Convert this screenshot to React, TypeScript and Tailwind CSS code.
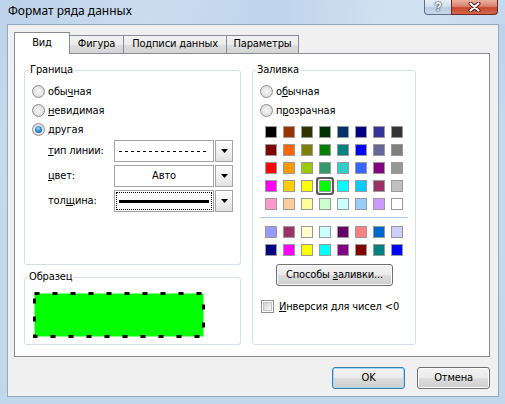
import React from "react";

const palette1: string[][] = [
  ["#000000", "#993300", "#333300", "#003300", "#003366", "#000080", "#333399", "#333333"],
  ["#800000", "#FF6600", "#808000", "#008000", "#008080", "#0000FF", "#666699", "#808080"],
  ["#FF0000", "#FF9900", "#99CC00", "#339966", "#33CCCC", "#3366FF", "#800080", "#969696"],
  ["#FF00FF", "#FFCC00", "#FFFF00", "#00FF00", "#00FFFF", "#00CCFF", "#993366", "#C0C0C0"],
  ["#FF99CC", "#FFCC99", "#FFFF99", "#CCFFCC", "#CCFFFF", "#99CCFF", "#CC99FF", "#FFFFFF"],
];
const palette2: string[][] = [
  ["#9999FF", "#993366", "#FFFFCC", "#CCFFFF", "#660066", "#FF8080", "#0066CC", "#CCCCFF"],
  ["#000080", "#FF00FF", "#FFFF00", "#00FFFF", "#800080", "#800000", "#008080", "#0000FF"],
];

function Radio({ checked, children }: { checked?: boolean; children: React.ReactNode }) {
  return (
    <div className="flex items-center h-[19px]">
      <span className="w-[13px] h-[13px] shrink-0 rounded-full border border-[#8f8f8f] bg-[radial-gradient(circle_at_50%_50%,#f6f6f6_0%,#e4e4e4_55%,#c9c9c9_100%)] flex items-center justify-center">
        {checked && (
          <span className="w-[7px] h-[7px] rounded-full bg-[radial-gradient(circle_at_45%_35%,#a6dcff_0%,#2f8fd8_45%,#0c4d98_100%)]" />
        )}
      </span>
      <span className="ml-[3px] leading-[14px]">{children}</span>
    </div>
  );
}

function Arrow() {
  return (
    <div className="w-[18px] h-full ml-[1px] border border-[#a3a3a3] bg-[linear-gradient(180deg,#ffffff_0%,#f1f1f1_50%,#e2e2e2_100%)] flex items-center justify-center">
      <svg width="7" height="4" viewBox="0 0 7 4">
        <path d="M0 0 H7 L3.5 4 Z" fill="#000" />
      </svg>
    </div>
  );
}

function Swatch({ color, selected }: { color: string; selected?: boolean }) {
  return (
    <div
      className={
        selected
          ? "w-[12px] h-[12px] border border-[#9a9a9a] rounded-[1px] shadow-[0_0_0_1px_#ffffff,0_0_0_3px_#5c5c5c]"
          : "w-[12px] h-[12px] border border-[#9a9a9a]"
      }
      style={{ backgroundColor: color }}
    />
  );
}

function WinButton({ children, primary, className }: { children: React.ReactNode; primary?: boolean; className?: string }) {
  return (
    <button
      className={
        (primary
          ? "border-[#3c7fb1] shadow-[inset_0_0_0_1px_#9fd8f6] "
          : "border-[#707070] shadow-[inset_0_0_0_1px_#fbfbfb] ") +
        "h-[22px] rounded-[3px] border bg-[linear-gradient(180deg,#f3f3f3_0%,#ebebeb_50%,#dddddd_50%,#cfcfcf_100%)] text-[11px] leading-[14px] text-black flex items-center justify-center " +
        (className ?? "")
      }
    >
      <span>{children}</span>
    </button>
  );
}

export default function App() {
  return (
    <div className="w-[505px] h-[404px] overflow-hidden flex flex-col text-[11px] tracking-[-0.15px] text-black font-['DejaVu_Sans_Condensed','DejaVu_Sans',sans-serif] bg-[linear-gradient(180deg,#bcd2ea_0%,#c6daef_35%,#c2d6ec_100%)]">
      {/* Title bar */}
      <div className="h-[24px] flex justify-between items-start bg-[linear-gradient(100deg,#bcd2ea_0%,#cadcf0_30%,#bfd4eb_55%,#d3e3f3_80%,#c4d8ee_100%)]">
        <span className="pl-[8px] pt-[3px] text-[12px] leading-[16px] tracking-normal font-['Noto_Sans','Open_Sans',sans-serif] text-black">
          Формат ряда данных
        </span>
        <div className="flex mr-[7px]">
          <div className="w-[27px] h-[15px] border border-t-0 border-r-0 border-[#5d6f86] rounded-bl-[4px] bg-[linear-gradient(180deg,#e6eef7_0%,#d3e0ee_45%,#b9cce1_55%,#c9d8e9_100%)] flex items-center justify-center">
            <span className="text-[12px] leading-[12px] font-bold text-white font-['Liberation_Sans',sans-serif] [text-shadow:0_0_1px_#34465c,0_0_1px_#34465c,0_0_2px_#34465c]">
              ?
            </span>
          </div>
          <div className="w-[47px] h-[15px] border border-t-0 border-[#6b2a1f] rounded-br-[4px] bg-[linear-gradient(180deg,#eab0a2_0%,#dc8370_45%,#c8472d_55%,#d4674a_100%)] flex items-center justify-center">
            <svg width="13" height="10" viewBox="0 0 13 10">
              <path d="M2.5 1.5 L10.5 8.5 M10.5 1.5 L2.5 8.5" stroke="#4a1a12" strokeWidth="4" strokeLinecap="round" />
              <path d="M2.5 1.5 L10.5 8.5 M10.5 1.5 L2.5 8.5" stroke="#ffffff" strokeWidth="2.2" strokeLinecap="round" />
            </svg>
          </div>
        </div>
      </div>

      {/* Client area */}
      <div className="ml-[7px] w-[492px] h-[373px] border border-[#95a8be] bg-[#f0f0f0] flex flex-col">
        {/* Tabs */}
        <div className="flex items-end h-[21px] ml-[6px] mt-[7px] relative z-10">
          <div className="w-[56px] h-[22px] -mb-px bg-white border border-b-0 border-[#898c95] flex items-center justify-center pb-[1px]">
            Вид
          </div>
          <div className="w-[54px] h-[18px] border border-l-0 border-b-0 border-[#898c95] bg-[linear-gradient(180deg,#f3f3f3_0%,#ebebeb_50%,#dedede_50%,#d4d4d4_100%)] flex items-center justify-center">
            Фигура
          </div>
          <div className="w-[103px] h-[18px] border border-l-0 border-b-0 border-[#898c95] bg-[linear-gradient(180deg,#f3f3f3_0%,#ebebeb_50%,#dedede_50%,#d4d4d4_100%)] flex items-center justify-center">
            Подписи данных
          </div>
          <div className="w-[72px] h-[18px] border border-l-0 border-b-0 border-[#898c95] bg-[linear-gradient(180deg,#f3f3f3_0%,#ebebeb_50%,#dedede_50%,#d4d4d4_100%)] flex items-center justify-center">
            Параметры
          </div>
        </div>

        {/* Panel */}
        <div className="ml-[6px] w-[476px] h-[304px] border border-[#898c95] bg-white flex items-start pt-[9px] pl-[9px] gap-[11px]">
          {/* Left column */}
          <div className="w-[217px] flex flex-col">
            <fieldset className="h-[202px] border border-[#d5dfe5] rounded-[3px] pl-[7px] pt-[5px] min-w-0">
              <legend className="ml-[-3px] px-[1px] leading-[14px]">Граница</legend>
              <Radio>
                обы<span className="underline">ч</span>ная
              </Radio>
              <Radio>
                <span className="underline">н</span>евидимая
              </Radio>
              <Radio checked>другая</Radio>
              <div className="mt-[1px] ml-[16px] grid grid-cols-[66px_119px] gap-y-[3px] items-center">
                <span>
                  <span className="underline">т</span>ип линии:
                </span>
                <div className="flex h-[22px]">
                  <div className="flex-1 border border-[#a3a3a3] bg-white flex items-center justify-center">
                    <svg width="90" height="1" viewBox="0 0 90 1">
                      <line x1="0" y1="0.5" x2="90" y2="0.5" stroke="#000" strokeWidth="1" strokeDasharray="3 3" />
                    </svg>
                  </div>
                  <Arrow />
                </div>
                <span>
                  <span className="underline">ц</span>вет:
                </span>
                <div className="flex h-[22px]">
                  <div className="flex-1 border border-[#a3a3a3] bg-white flex items-center justify-center">Авто</div>
                  <Arrow />
                </div>
                <span>
                  тол<span className="underline">щ</span>ина:
                </span>
                <div className="flex h-[22px]">
                  <div className="flex-1 border border-[#a3a3a3] bg-white p-[1px]">
                    <div className="w-full h-full border border-dotted border-black flex items-center justify-center">
                      <div className="w-[90px] h-[3px] bg-black" />
                    </div>
                  </div>
                  <Arrow />
                </div>
              </div>
            </fieldset>

            <fieldset className="mt-[5px] h-[75px] border border-[#d5dfe5] rounded-[3px] pl-[8px] pt-[8px] min-w-0">
              <legend className="ml-[-5px] px-[1px] leading-[14px]">Образец</legend>
              <svg width="172" height="46" viewBox="0 0 172 46" className="block">
                <rect x="1.5" y="1.5" width="169" height="43" fill="#00ff00" stroke="#000" strokeWidth="3" strokeDasharray="5 13" />
              </svg>
            </fieldset>
          </div>

          {/* Right column */}
          <div className="w-[164px] flex flex-col">
            <fieldset className="h-[282px] border border-[#d5dfe5] rounded-[3px] pl-[7px] pt-[5px] min-w-0">
              <legend className="ml-[-4px] px-[1px] leading-[14px]">Заливка</legend>
              <Radio>
                о<span className="underline">б</span>ычная
              </Radio>
              <Radio>
                п<span className="underline">р</span>озрачная
              </Radio>

              <div className="mt-[6px] ml-[5px] grid grid-cols-[repeat(8,12px)] gap-[6px] w-[138px]">
                {palette1.map((row, r) =>
                  row.map((c, i) => <Swatch key={"a" + r + "-" + i} color={c} selected={r === 3 && i === 3} />)
                )}
              </div>

              <div className="mt-[7px] w-[148px] h-px bg-[#a9c7e8]" />

              <div className="mt-[8px] ml-[5px] grid grid-cols-[repeat(8,12px)] gap-[6px] w-[138px]">
                {palette2.map((row, r) => row.map((c, i) => <Swatch key={"b" + r + "-" + i} color={c} />))}
              </div>

              <WinButton className="mt-[8px] ml-[16px] w-[117px]">
                Способы <span className="underline">з</span>аливки...
              </WinButton>

              <div className="mt-[13px] ml-[1px] flex items-center h-[15px]">
                <span className="w-[13px] h-[13px] shrink-0 border border-[#8f8f8f] bg-white p-[1px]">
                  <span className="block w-full h-full border border-[#c4c4c4] bg-[linear-gradient(135deg,#cfcfcf_0%,#e9e9e9_60%,#f7f7f7_100%)]" />
                </span>
                <span className="ml-[5px] leading-[14px]">
                  <span className="underline">И</span>нверсия для чисел &lt;0
                </span>
              </div>
            </fieldset>
          </div>
        </div>

        {/* Buttons */}
        <div className="mt-[10px] flex justify-end gap-[12px] pr-[8px]">
          <WinButton primary className="w-[73px]">
            OK
          </WinButton>
          <WinButton className="w-[73px]">Отмена</WinButton>
        </div>
      </div>
    </div>
  );
}
